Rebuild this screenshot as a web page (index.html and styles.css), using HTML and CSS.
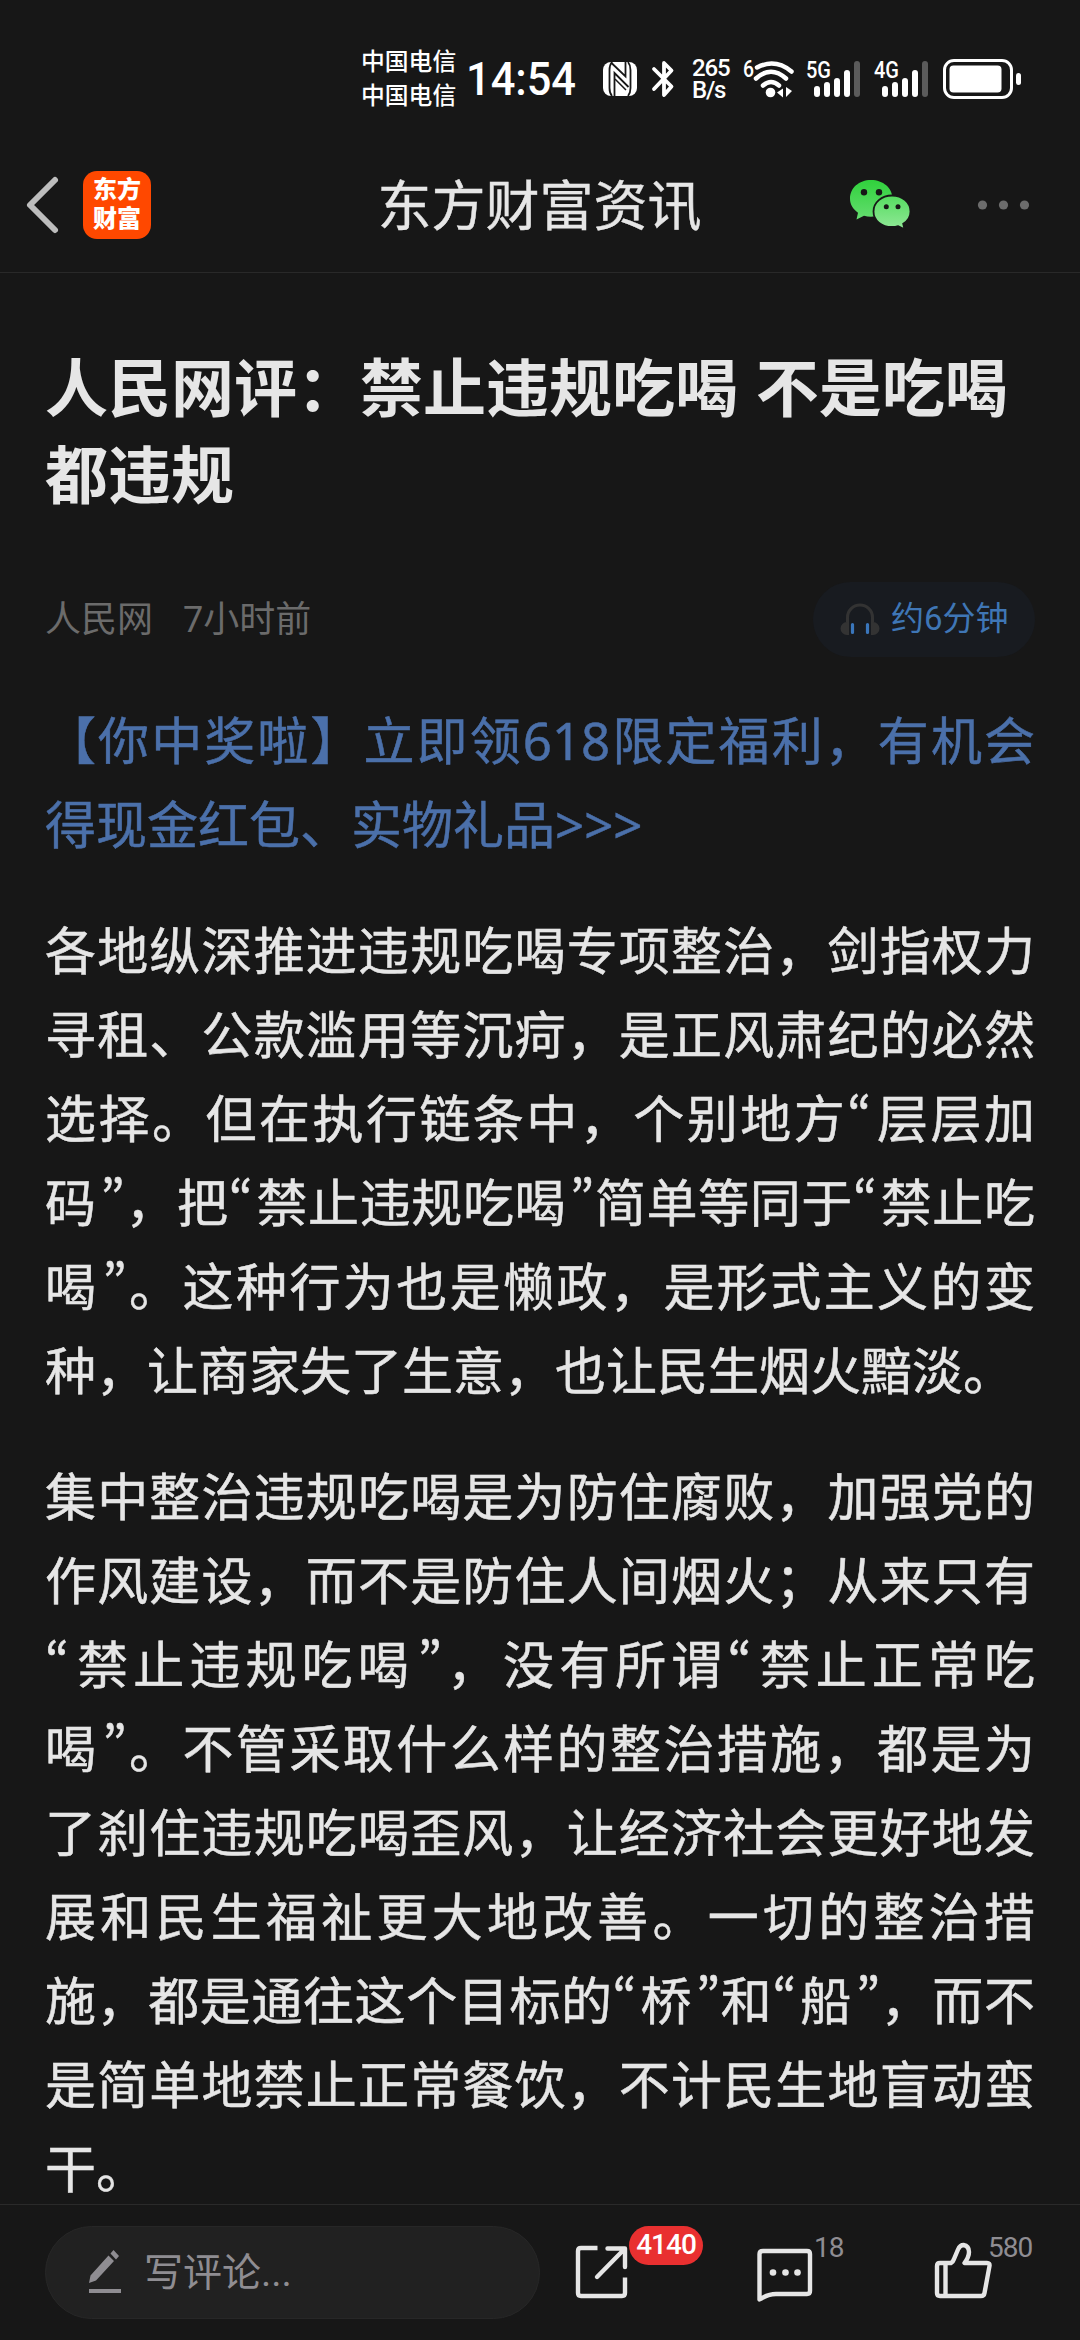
FILE: index.html
```html
<!DOCTYPE html>
<html lang="zh-CN">
<head>
<meta charset="utf-8">
<title>东方财富资讯</title>
<link rel="stylesheet" href="styles.css">
</head>
<body>
<div class="screen">
  <div class="status">
    <div class="carriers"><span>中国电信</span><span>中国电信</span></div>
    <svg class="clock" width="112" height="60" viewBox="0 -10 112 60"><text x="0" y="36" textLength="110" lengthAdjust="spacingAndGlyphs">14:54</text></svg>
    <svg class="nfc" width="34" height="34" viewBox="0 0 34 34">
      <rect width="34" height="34" rx="8" fill="#fff"/>
      <path d="M9 0Q6.500 3 6.500 8V26Q6.500 31 9 34M25 0Q27.500 3 27.500 8V26Q27.500 31 25 34" fill="none" stroke="#171717" stroke-width="1.800"/>
      <path d="M11.500 34V11L25.500 25M22.500 0V14.500L8.500 1" fill="none" stroke="#171717" stroke-width="1.800"/><path d="M12 17L23 28" fill="none" stroke="#171717" stroke-width="1.500"/>
    </svg>
    <svg class="bt" width="22" height="36" viewBox="0 0 22 36"><path d="M2 8L19.5 25.5L12 34V2L19.5 9.5L2 28" fill="none" stroke="#fff" stroke-width="3.8" stroke-linecap="round" stroke-linejoin="round"/></svg>
    <div class="speed"><span>265</span><span>B/s</span></div>
    <svg class="small-label wifi" width="52" height="52" viewBox="0 -6 52 52">
      <text x="0" y="18" textLength="11" lengthAdjust="spacingAndGlyphs">6</text>
      <g fill="none" stroke="#fff" stroke-width="4.500" stroke-linecap="round"><path d="M14 8.500Q32-1 48.500 12.500"/><path d="M13 19.500Q28 6 43 19.500"/><path d="M20 26.500Q28 19.500 36 26.500"/></g>
      <circle cx="27.500" cy="33.500" r="4.800" fill="#fff"/><path d="M34 33.500l6-4v9zM49 32l-6-4v10z" fill="#fff"/>
    </svg>
    <svg class="small-label signal" width="56" height="52" viewBox="0 -6 56 52">
      <text x="0" y="19" textLength="25" lengthAdjust="spacingAndGlyphs">5G</text>
      <g stroke="#fff" stroke-width="6" stroke-linecap="round"><path d="M11 30V35M21 26V35M31 22V35M41 14V35"/><path d="M51 5V35" stroke="#5b5b5b"/></g>
    </svg>
    <svg class="small-label signal" width="56" height="52" viewBox="0 -6 56 52">
      <text x="0" y="19" textLength="25" lengthAdjust="spacingAndGlyphs">4G</text>
      <g stroke="#fff" stroke-width="6" stroke-linecap="round"><path d="M11 30V35M21 26V35M31 22V35M41 14V35"/><path d="M51 5V35" stroke="#5b5b5b"/></g>
    </svg>
    <svg class="battery" width="78" height="40" viewBox="0 0 78 40"><rect x="1.500" y="1.500" width="67" height="37" rx="9.500" fill="none" stroke="#fff" stroke-width="3"/><rect x="6.500" y="6.500" width="52" height="27" rx="4" fill="#fff"/><rect x="73" y="14" width="5" height="12" rx="2.500" fill="#fff"/></svg>
  </div>

  <header class="nav">
    <div class="nav-left">
      <svg width="35" height="58" viewBox="0 0 35 58"><path d="M32 4L7 29L32 54" fill="none" stroke="#bdbdbd" stroke-width="6" stroke-linecap="round" stroke-linejoin="round"/></svg>
      <div class="logo"><span>东方</span><span>财富</span></div>
    </div>
    <h1 class="nav-title">东方财富资讯</h1>
    <div class="nav-right">
      <svg width="62" height="50" viewBox="0 0 62 50">
        <defs><linearGradient id="g1" x2="0" y2="1"><stop stop-color="#30d13c"/><stop offset="1" stop-color="#65dd70"/></linearGradient><linearGradient id="g2" x2="0" y2="1"><stop stop-color="#55dc60"/><stop offset="1" stop-color="#91e897"/></linearGradient></defs>
        <path d="M22 0C10 0 1 8 1 18.500c0 6 3 10.500 8 14.300L7.500 39.500l7.500-3.800c2.200.7 4.500 1 7 1 12 0 21.500-7.700 21.500-18.200S34 0 22 0z" fill="url(#g1)"/>
        <ellipse cx="15" cy="12.300" rx="3.200" ry="3.200" fill="#171717"/><ellipse cx="30" cy="12.300" rx="3.200" ry="3.200" fill="#171717"/>
        <path d="M43 15.500C32.500 15.500 24.500 22.500 24.500 31.500S32.500 47 43 47c2.200 0 4.300-.3 6.200-.9l6.300 3.200-1.300-5.500C58.800 41 61.500 37 61.500 31.500c0-9-8-16-18.500-16z" fill="url(#g2)" stroke="#171717" stroke-width="1.800"/>
        <circle cx="37.300" cy="26.800" r="2.500" fill="#171717"/><circle cx="49" cy="26.800" r="2.500" fill="#171717"/>
      </svg>
      <svg width="54" height="10" viewBox="0 0 54 10" fill="#6c6c6c"><circle cx="5.500" cy="5" r="4.600"/><circle cx="26.500" cy="5" r="4.600"/><circle cx="47.500" cy="5" r="4.600"/></svg>
    </div>
  </header>

  <main class="article">
    <h2 class="headline">人民网评：禁止违规吃喝 不是吃喝<br>都违规</h2>
    <div class="meta">
      <span class="source">人民网</span><span class="source">7小时前</span>
      <div class="listen">
        <svg width="40" height="34" viewBox="0 0 40 34"><path d="M7.500 19V14.500A12.500 12.500 0 0 1 32.500 14.500V19" fill="none" stroke="#333" stroke-width="3"/><path d="M9 19v13H7A6.500 6.500 0 0 1 7 19zM31 19v13h2A6.500 6.500 0 0 0 33 19z" fill="#333"/><path d="M12.500 21.500V29.500M27.500 21.500V29.500" stroke="#3a76bb" stroke-width="3.200" stroke-linecap="round"/></svg>
        <span>约6分钟</span>
      </div>
    </div>
    <p class="para promo"><span>【你中奖啦】立即领618限定福利，有机会</span><span class="end">得现金红包、实物礼品&gt;&gt;&gt;</span></p>
    <p class="para"><span>各地纵深推进违规吃喝专项整治，剑指权力</span><span>寻租、公款滥用等沉疴，是正风肃纪的必然</span><span>选择。但在执行链条中，个别地方<i class="open">“</i>层层加</span><span>码<i class="close">”</i>，把<i class="open">“</i>禁止违规吃喝<i class="close">”</i>简单等同于<i class="open">“</i>禁止吃</span><span>喝<i class="close">”</i>。这种行为也是懒政，是形式主义的变</span><span class="end">种，让商家失了生意，也让民生烟火黯淡。</span></p>
    <p class="para"><span>集中整治违规吃喝是为防住腐败，加强党的</span><span>作风建设，而不是防住人间烟火；从来只有</span><span><i class="open">“</i>禁止违规吃喝<i class="close">”</i>，没有所谓<i class="open">“</i>禁止正常吃</span><span>喝<i class="close">”</i>。不管采取什么样的整治措施，都是为</span><span>了刹住违规吃喝歪风，让经济社会更好地发</span><span>展和民生福祉更大地改善。一切的整治措</span><span>施，都是通往这个目标的<i class="open">“</i>桥<i class="close">”</i>和<i class="open">“</i>船<i class="close">”</i>，而不</span><span>是简单地禁止正常餐饮，不计民生地盲动蛮</span><span class="end">干。</span></p>
  </main>

  <footer class="bar">
    <div class="comment">
      <svg width="34" height="46" viewBox="0 0 34 46" fill="#8f8d92"><path d="M1 34L2.500 26.500L20.500 6.500L26 12L8 31.500zM22.500 4.500L25.500 1L31 7L28 10.500zM1 40h32v4H1z"/></svg>
      <span>写评论...</span>
    </div>
    <div class="action share">
      <svg width="56" height="56" viewBox="0 0 56 56" fill="none" stroke="#e6e6e6" stroke-width="4.400"><path d="M23.500 4H7Q4 4 4 7V49Q4 52 7 52H48Q51 52 51 49V33.500"/><path d="M33.500 4.500H51V23M50 5.500L23 33" stroke-linecap="round" stroke-linejoin="round"/></svg>
      <span class="badge">4140</span>
    </div>
    <div class="action talk">
      <svg width="60" height="58" viewBox="0 0 60 58"><path d="M7 5H51Q54 5 54 8V45Q54 48 51 48H20Q12 48 3.500 53.500V8Q3.500 5 7 5z" fill="none" stroke="#e6e6e6" stroke-width="4.400" stroke-linejoin="round"/><g fill="#e6e6e6"><circle cx="17" cy="26.500" r="3.300"/><circle cx="29.500" cy="26.500" r="3.300"/><circle cx="41.500" cy="26.500" r="3.300"/></g></svg>
      <span class="count">18</span>
    </div>
    <div class="action like">
      <svg width="60" height="60" viewBox="0 0 60 60" fill="none" stroke="#e6e6e6" stroke-width="4.400" stroke-linejoin="round"><path d="M7 23H18Q20 22 21 19L25 9.500Q27 5 30.500 5Q36 6 36 12Q36 17 31.500 23H54Q57 23 56.500 26L51.500 53Q51 56 48 56H7Q4 56 4 53V26Q4 23 7 23zM12.500 23V56"/></svg>
      <span class="count">580</span>
    </div>
  </footer>
</div>
</body>
</html>
```

FILE: styles.css
```css
* { box-sizing: border-box; margin: 0; padding: 0; }
html, body { background: #171717; }
body {
  font-family: Roboto, "Noto Sans CJK SC", sans-serif;
  color: #e6e6e6;
  text-spacing-trim: space-all;
}
svg { display: block; flex: none; overflow: visible; }
.screen {
  width: 1080px; height: 2340px;
  display: flex; flex-direction: column;
  overflow: hidden; background: #171717;
}

.status {
  flex: none; height: 136px;
  padding: 22px 59px 0 361px;
  display: flex; align-items: center;
  color: #fff;
}
.carriers { display: flex; flex-direction: column; width: 96px; font-size: 23.8px; line-height: 34px; font-weight: 500; white-space: nowrap; }
.clock { margin-left: 9px; }
.clock text { font-size: 47px; font-weight: 500; fill: #fff; }
.nfc { margin-left: 25px; }
.bt { margin-left: 15px; }
.small-label text { font-size: 24px; font-weight: 500; fill: #fff; }
.speed { display: flex; flex-direction: column; width: 38px; margin-left: 18px; font-size: 24px; line-height: 22px; font-weight: 500; letter-spacing: -1.2px; white-space: nowrap; }
.wifi { margin-left: 13px; }
.signal { margin-left: 11px; }
.signal + .signal { margin-left: 12px; }
.battery { margin-left: auto; }

.nav {
  flex: none; height: 137px;
  border-bottom: 1px solid #292929;
  display: grid; grid-template-columns: 1fr auto 1fr; align-items: center;
  padding: 2px 49px 0 24px;
}
.nav-left, .nav-right { display: flex; align-items: center; }
.nav-left { gap: 24px; }
.nav-left svg { margin-left: -1px; margin-right: 1px; }
.nav-right { justify-content: flex-end; gap: 66px; }
.logo {
  width: 68px; height: 68px; border-radius: 14px; background: #ff4800;
  display: flex; flex-direction: column; align-items: center; justify-content: center;
  color: #fff; font-size: 24px; line-height: 29px; font-weight: 900;
}
.nav-title { font-size: 54px; line-height: 70px; font-weight: 400; margin-right: -24px; padding-top: 6px; -webkit-text-stroke: 0.4px; }

.article { flex: 1; min-height: 0; overflow: hidden; padding: 73px 45px 0; }
.headline { font-size: 63px; line-height: 87px; font-weight: 700; white-space: nowrap; word-spacing: 2px; }
.meta {
  display: flex; align-items: center; gap: 30px;
  height: 75px; margin-top: 62px;
  font-size: 36px; color: #6b6b6b;
}
.meta span { padding-bottom: 7px; }
.listen {
  margin-left: auto; width: 222px; height: 75px; border-radius: 38px;
  padding-left: 27px; background: #181b20;
  display: flex; align-items: center; gap: 11px;
  font-size: 33px; color: #3f76b5; white-space: nowrap;
}
.para {
  margin-top: 42px; font-size: 51px; line-height: 84px;
  font-family: "Noto Sans", "Noto Sans CJK SC", sans-serif;
  -webkit-text-stroke: 0.5px;
}
.para span { display: block; white-space: nowrap; text-align: justify; text-align-last: justify; }
.para .end { text-align-last: left; }
.para i { font-style: normal; font-family: "Noto Sans CJK SC", sans-serif; font-feature-settings: "pwid"; line-height: 0; }
.open { padding-right: 3px; }
.close { padding-left: 4px; }
.promo { margin-top: 41px; color: #4b70aa; }

.bar {
  flex: none; height: 136px;
  border-top: 1px solid #2a2a2a;
  display: flex; align-items: flex-start;
  padding: 21px 45px 0;
}
.comment {
  width: 495px; height: 93px; border-radius: 47px;
  border: 1px solid #272727; background: #212121;
  padding-left: 42px; display: flex; align-items: center; gap: 22px;
  font-size: 39px; color: #8f8d92;
}
.comment svg { margin-top: -2px; }
.comment span { padding-bottom: 8px; }
.action { display: flex; align-items: flex-start; }
.share { margin-left: 34px; width: 182px; }
.share svg { margin-top: 18px; }
.badge {
  width: 74px; height: 39px; border-radius: 20px; background: #e93030;
  color: #fff; font-size: 28px; line-height: 38px; font-weight: 500;
  text-align: center; letter-spacing: -1px; margin-left: -1px;
}
.talk { width: 177px; }
.talk svg { margin-top: 20px; }
.like svg { margin-top: 14px; }
.count { font-size: 28px; line-height: 34px; color: #8f8d92; margin-top: 5px; letter-spacing: -1px; margin-left: -2px; }
.like .count { margin-left: -5px; }
```
